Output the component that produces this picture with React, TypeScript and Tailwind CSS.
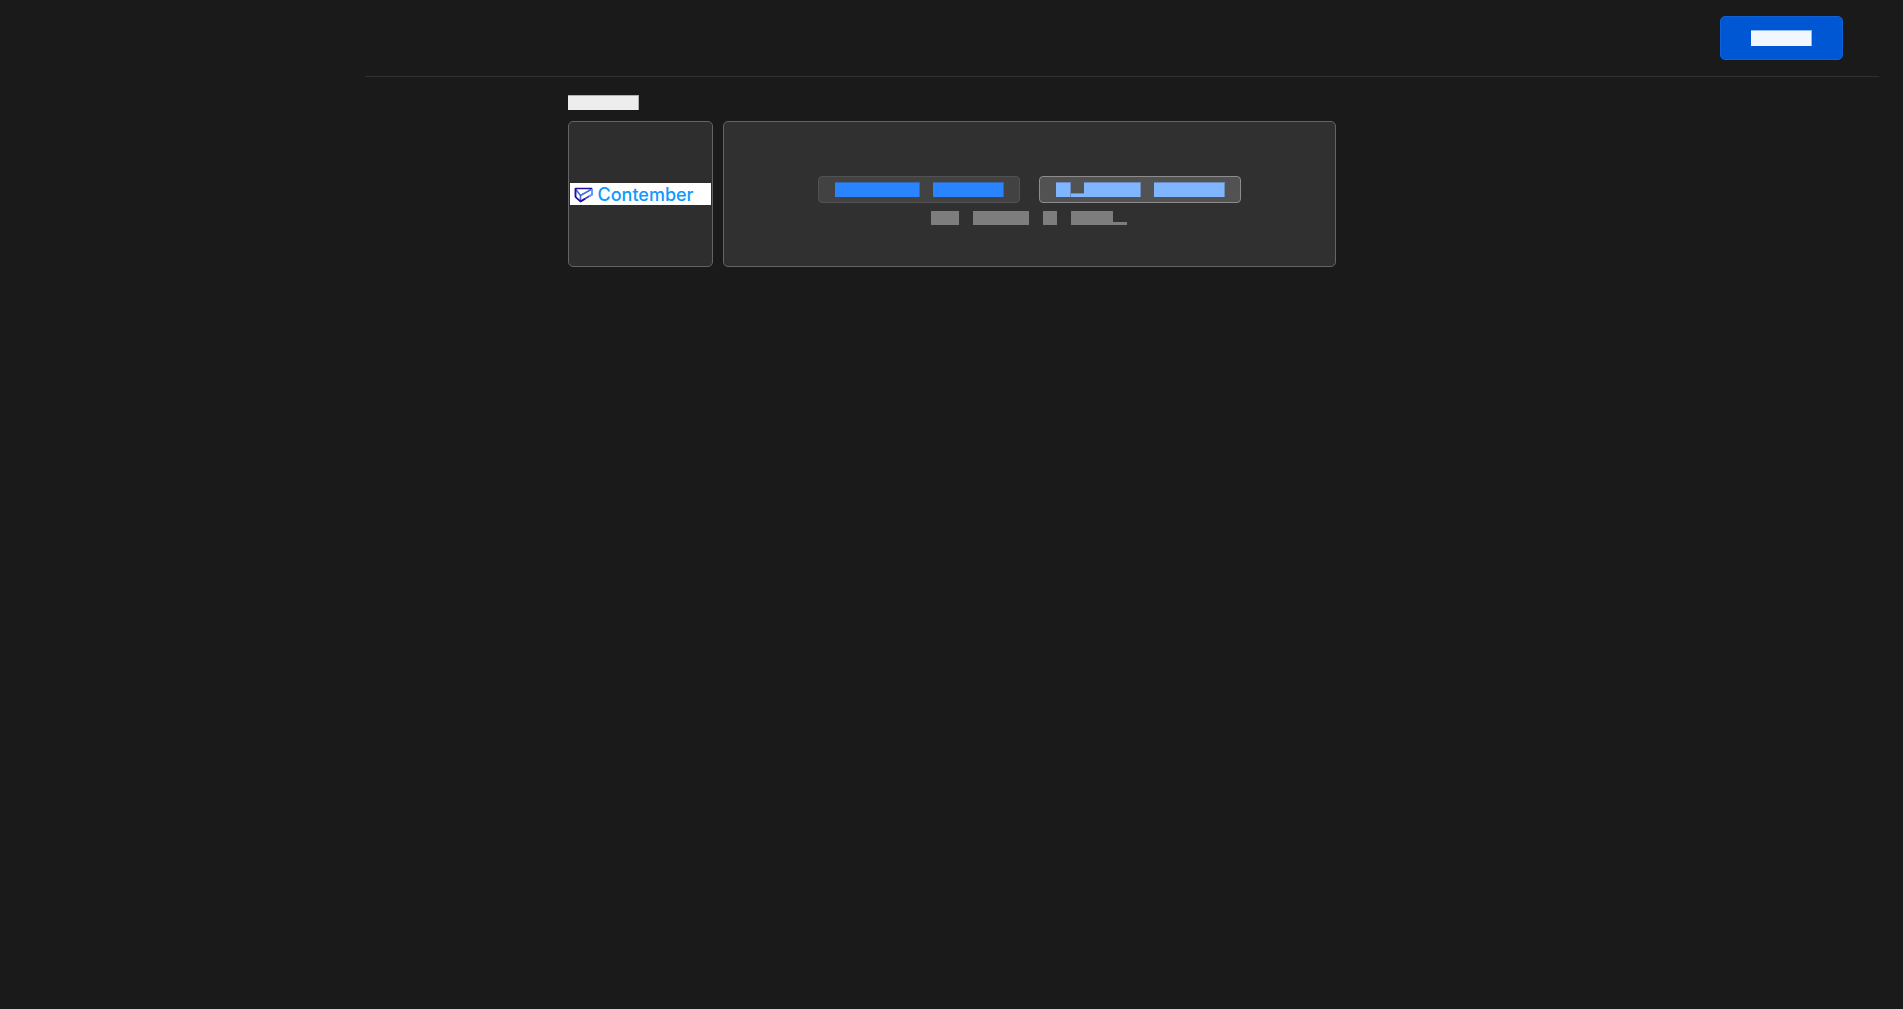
import type { ReactNode } from "react";

function Word({ className }: { className: string }) {
  return <span aria-hidden="true" className={"block shrink-0 " + className} />;
}

function Action({ label, className, children }: { label: string; className: string; children: ReactNode }) {
  return (
    <button
      type="button"
      aria-label={label}
      className={"flex h-[27px] items-center gap-[13px] rounded-[4px] border pr-[15px] pl-4 " + className}
    >
      {children}
    </button>
  );
}

function Logo() {
  return (
    <div className="flex h-[22px] w-full items-center gap-1 bg-white pl-1">
      <svg width="20" height="18" viewBox="0 0 20 18" fill="none" strokeWidth="1.6" strokeLinejoin="round" aria-hidden="true">
        <path d="M1.5 4V12L6.5 16.5V10.5Z" stroke="#4a63dd" />
        <path d="M18 3.5V9.5L6.5 16.5" stroke="#3a45c8" />
        <path d="M18 4L6.5 10.5" stroke="#3d6ee0" />
        <path d="M1.5 12V3.5H18" stroke="#231094" />
        <path d="M1.5 12L6.5 16.5L11 13.8" stroke="#231094" />
        <path d="M18 4V9.5L15 11.3" stroke="#5aaef5" />
      </svg>
      <span className="pt-0.5 font-['Inter'] text-[18px] leading-5 font-medium text-[#0d99ff]">Contember</span>
    </div>
  );
}

export default function App() {
  return (
    <div className="min-h-screen bg-[#1a1a1a] font-['Inter',sans-serif]">
      <header className="mr-6 ml-[365px] flex justify-end border-b border-[#303030] pt-4 pr-9 pb-4">
        <button
          type="button"
          aria-label="Save"
          className="flex h-11 w-[123px] items-center justify-center rounded-[5px] border border-[#1260d6] bg-[#0057d3]"
        >
          <Word className="h-4 w-[61px] border-t border-r border-[#8fb9f0] bg-[#f0f7ff]" />
        </button>
      </header>
      <main className="mx-auto max-w-3xl pt-[18px]">
        <Word className="h-[15px] w-[71px] border-t border-r border-[#b0b0b0] bg-[#ededed]" />
        <div className="mt-[11px] flex gap-[10px]">
          <div className="flex h-[146px] w-[145px] shrink-0 items-center rounded-[5px] border border-[#646464] bg-[#2e2e2e] p-px">
            <Logo />
          </div>
          <section className="flex h-[146px] flex-1 flex-col items-center justify-center gap-2 rounded-[5px] border border-[#646464] bg-[#303030] pt-3">
            <div className="flex gap-[19px]">
              <Action label="Select image" className="border-[#525252] bg-[#424242]">
                <Word className="h-[15px] w-[85px] border-t border-r border-[#3568b4] bg-[#2a83ff]" />
                <Word className="h-[15px] w-[71px] border-t border-r border-[#3568b4] bg-[#2a83ff]" />
              </Action>
              <Action label="Upload image" className="border-[#8c8c8c] bg-[#525252]">
                <span aria-hidden="true" className="flex items-end">
                  <Word className="h-[15px] w-[15px] border-t border-r border-[#6b8dbd] bg-[#80b5ff]" />
                  <Word className="h-1 w-[13px] border-t border-[#6b8dbd] bg-[#80b5ff]" />
                  <Word className="h-[15px] w-[57px] border-t border-r border-[#6b8dbd] bg-[#80b5ff]" />
                </span>
                <Word className="h-[15px] w-[71px] border-t border-r border-[#6b8dbd] bg-[#80b5ff]" />
              </Action>
            </div>
            <div className="flex gap-[14px]">
              <Word className="h-[14px] w-7 bg-[#7d7d7d]" />
              <Word className="h-[14px] w-14 bg-[#7d7d7d]" />
              <Word className="h-[14px] w-[14px] bg-[#7d7d7d]" />
              <span className="flex items-end">
                <Word className="h-[14px] w-[42px] bg-[#7d7d7d]" />
                <Word className="h-[3px] w-[14px] bg-[#7d7d7d]" />
              </span>
            </div>
          </section>
        </div>
      </main>
    </div>
  );
}
